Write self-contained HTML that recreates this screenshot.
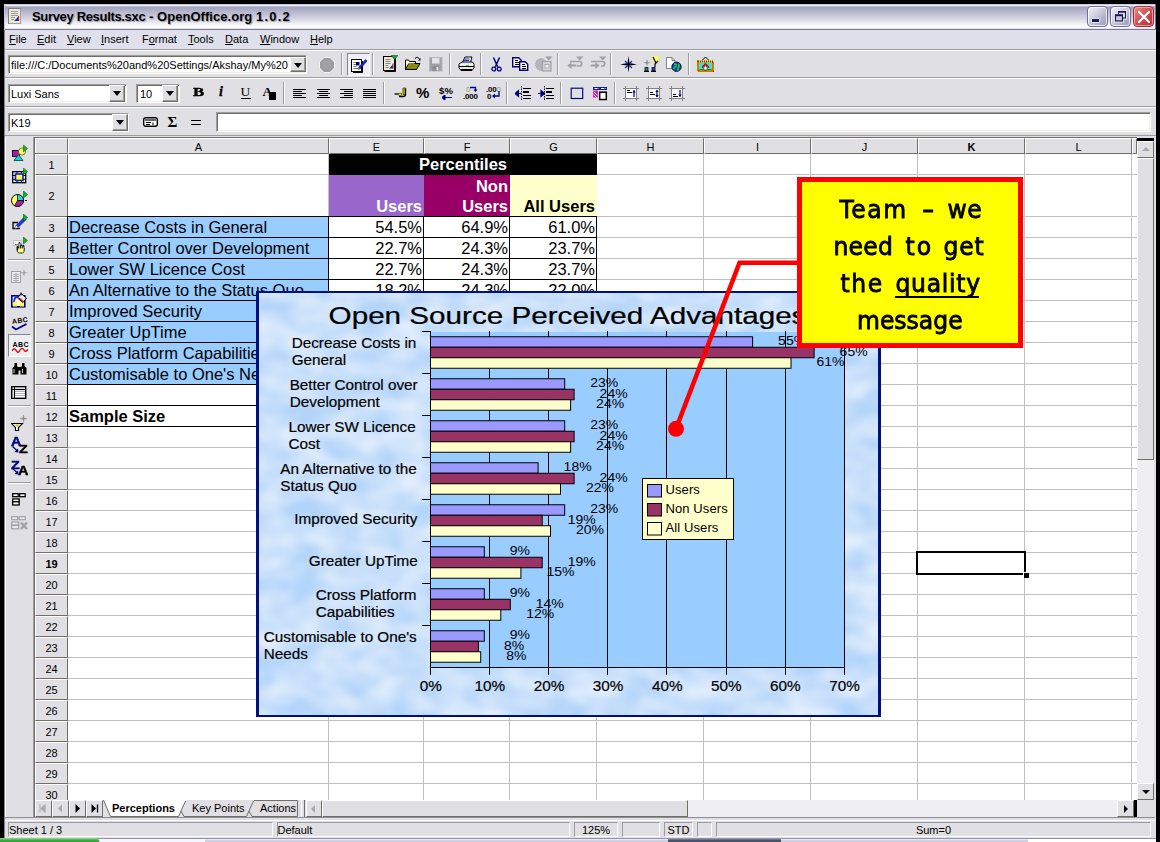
<!DOCTYPE html>
<html><head><meta charset="utf-8"><title>Survey Results.sxc - OpenOffice.org 1.0.2</title>
<style>
*{box-sizing:border-box;margin:0;padding:0}
html,body{width:1160px;height:842px;overflow:hidden;background:#000}
body{position:relative;font-family:"Liberation Sans",sans-serif;font-size:11px;color:#000}
#win{position:absolute;left:4px;top:4px;width:1152px;height:834px;background:#e0dfe3}
#root{position:absolute;left:0;top:0;width:1160px;height:842px}
#root>*{position:absolute}
#root i{position:absolute;display:block}
.t{white-space:pre;line-height:1}
.wb{top:6px;width:21px;height:21px;border-radius:4px;border:1px solid #6e6e9a;background:linear-gradient(135deg,#f4f4fa 0,#d4d4e4 35%,#b0b0cc 70%,#9c9cbc 100%);box-shadow:inset 0 0 0 1px rgba(255,255,255,.75)}
.wb.wc{border-color:#a03038;background:linear-gradient(135deg,#e89090 0,#d86060 35%,#c44048 70%,#b83038 100%);box-shadow:inset 0 0 0 1px rgba(255,220,220,.55)}
.wb *{position:absolute}
.hl{height:2px;left:4px;width:1152px;border-top:1px solid #9d9da1;border-bottom:1px solid #fff}
.vs{width:2px;height:22px;border-left:1px solid #9d9da1;border-right:1px solid #fff}
.sunk{background:#fff;border:1px solid;border-color:#9d9da1 #fff #fff #9d9da1;box-shadow:inset 1px 1px 0 #716f64,inset -1px -1px 0 #f1efe2}
.dd{width:16px;height:17px;background:#e0dfe3;border:1px solid;border-color:#fff #716f64 #716f64 #fff;box-shadow:inset -1px -1px 0 #9d9da1}
.dd:after{content:"";position:absolute;left:2.5px;top:5px;border:4.5px solid transparent;border-top:5px solid #000;border-bottom:0}
.mn{top:33px;font-size:11px;white-space:pre;line-height:13px}
.mn u{text-decoration:underline;text-underline-offset:1px;text-decoration-thickness:1px}
.ch{top:138px;height:16px;border:1px solid;border-color:#fff #716f64 #716f64 #fff;text-align:center;font-size:11px;line-height:16px;overflow:hidden}
.rh{left:35px;width:33px;border:1px solid;border-color:#fff #716f64 #716f64 #fff;text-align:center;font-size:11px;overflow:hidden}
.cl{font-size:16.5px;line-height:16px}
.cb{font-size:16.5px;line-height:16px;font-weight:bold}
.co{font:23.500px/28px "DejaVu Sans",sans-serif;white-space:pre;color:#000;-webkit-text-stroke:.8px #000;transform:scaleY(1.08);transform-origin:0 0}
.sb{background:#e0dfe3;border:1px solid;border-color:#fff #716f64 #716f64 #fff}
.sb>*{position:absolute}
.sf{top:822px;height:15px;border:1px solid;border-color:#9a9aa4 #fff #fff #9a9aa4}

</style></head><body>
<div id="win"></div>
<div id="root">
<!-- title bar -->
<div style="left:4px;top:4px;width:1152px;height:26px;background:linear-gradient(#c0c0d6 0,#c8c8dc .5px,#eeeef6 1.500px,#b8b8d2 2.500px,#a6a6c2 3.500px,#a8a8c4 4.500px,#d2d2e0 14px,#fdfdfe 22.500px,#fff 23.500px,#e6e4e8 24.500px,#e6e4e8 25px,#7a7a98 25px,#7a7a98 26px);border-left:1px solid #c9c9dd;border-right:1px solid #6c6c90"></div>
<svg style="left:8px;top:8px" width="14" height="16" viewBox="0 0 14 16">
<rect x="0.5" y="0.5" width="12" height="15" fill="#ece9d8" stroke="#808080"/>
<path d="M3 3.5h7M3 5.5h7M3 7.5h7M3 9.5h4M3 11.5h3" stroke="#9a9a9a" stroke-width="1"/>
<path d="M6 13l4-4v4z" fill="#1030c0"/><path d="M10 13V8l1 0v5z" fill="#c01030"/>
<path d="M12.5 1v15M1 15.5h12" stroke="#a0a0a0" stroke-width="1"/>
</svg>
<div class="t" style="left:32px;top:9px;font:bold 13px 'Liberation Sans',sans-serif;letter-spacing:.05px;color:#000;text-shadow:1px 1px 1px #9a9ab0"><span style="letter-spacing:-.33px">Survey Results.sxc</span> - OpenOffice.org <span style="letter-spacing:1.200px">1.0.2</span></div>
<!-- window buttons -->
<div class="wb" style="left:1087px"><i style="left:4px;top:12px;width:7px;height:3px;background:#1a1a50;box-shadow:0 0 0 .5px #fff"></i></div>
<div class="wb" style="left:1110px"><svg style="left:2px;top:2px" width="16" height="16" viewBox="0 0 16 16"><g fill="none" stroke="#fff" stroke-width="3" opacity=".75"><path d="M5.500 5v-2.500h7v6.500h-2.500"/><rect x="2.500" y="6" width="7" height="6"/></g><path d="M5.500 5.500v-3h7v6.500h-3" fill="none" stroke="#1a1a50" stroke-width="1.200"/><path d="M5 2.800h8" stroke="#1a1a50" stroke-width="1.800"/><rect x="2.500" y="6" width="7" height="6" fill="#c8c8dc" stroke="#1a1a50" stroke-width="1.200"/><path d="M2 6.300h8" stroke="#1a1a50" stroke-width="1.800"/></svg></div>
<div class="wb wc" style="left:1133px"><svg style="left:0;top:0" width="20" height="20" viewBox="0 0 20 20"><path d="M5 5l10 10M15 5L5 15" stroke="#fff" stroke-width="2.300" stroke-linecap="round"/></svg></div>
<!-- menu bar -->
<div style="left:5px;top:30px;width:1150px;height:19px;background:#dfe0eb"></div>
<div class="mn" style="left:9px"><u>F</u>ile</div>
<div class="mn" style="left:37px"><u>E</u>dit</div>
<div class="mn" style="left:67px"><u>V</u>iew</div>
<div class="mn" style="left:101px"><u>I</u>nsert</div>
<div class="mn" style="left:142px">F<u>o</u>rmat</div>
<div class="mn" style="left:188px"><u>T</u>ools</div>
<div class="mn" style="left:225px"><u>D</u>ata</div>
<div class="mn" style="left:260px"><u>W</u>indow</div>
<div class="mn" style="left:310px"><u>H</u>elp</div>
<div class="hl" style="top:49px"></div>
<div class="hl" style="top:77px"></div>
<div class="hl" style="top:106px"></div>
<div class="hl" style="top:135px;border-bottom:0;height:1px"></div>
<!-- toolbar 1 -->
<div class="sunk" style="left:8px;top:55px;width:299px;height:19px"></div>
<div class="t" style="left:11px;top:60px;font-size:11px">file:///C:/Documents%20and%20Settings/Akshay/My%20</div>
<div style="left:288px;top:57px;width:19px;height:15px;background:#fff"></div>
<div class="dd" style="left:290px;top:57px;height:15px"></div>
<div class="vs" style="left:341px;top:53px"></div>
<div class="vs" style="left:372px;top:53px"></div>
<div class="vs" style="left:449px;top:53px"></div>
<div class="vs" style="left:480px;top:53px"></div>
<div class="vs" style="left:557px;top:53px"></div>
<div class="vs" style="left:610px;top:53px"></div>
<div class="vs" style="left:688px;top:53px"></div>
<!-- toolbar 2 -->
<div class="sunk" style="left:8px;top:84px;width:119px;height:19px"></div>
<div class="t" style="left:11px;top:89px;font-size:11px">Luxi Sans</div>
<div class="dd" style="left:109px;top:85px"></div>
<div class="sunk" style="left:136px;top:84px;width:44px;height:19px"></div>
<div class="t" style="left:140px;top:89px;font-size:11px">10</div>
<div class="dd" style="left:162px;top:85px"></div>
<div class="vs" style="left:283px;top:82px"></div>
<div class="vs" style="left:383px;top:82px"></div>
<div class="vs" style="left:506px;top:82px"></div>
<div class="vs" style="left:560px;top:82px"></div>
<div class="vs" style="left:614px;top:82px"></div>
<!-- formula bar -->
<div class="sunk" style="left:8px;top:113px;width:121px;height:19px"></div>
<div class="t" style="left:11px;top:118px;font-size:11px">K19</div>
<div class="dd" style="left:112px;top:114px"></div>
<div class="sunk" style="left:216px;top:112px;width:935px;height:20px"></div>
<!--ICONS-->
<!-- toolbar icons -->
<svg style="left:319px;top:57px" width="16" height="16" viewBox="0 0 16 16" ><path d="M5 .5h6l4.500 4.500v6l-4.500 4.500h-6l-4.500-4.500v-6z" fill="#a2a2a6" stroke="#f4f4f6" stroke-width="1"/><path d="M5.300 2h5.400l3.300 3.300v5.400l-3.300 3.300h-5.400l-3.300-3.300v-5.400z" fill="#a2a2a6" stroke="#8e8e94" stroke-width=".6"/></svg>
<div style="left:347px;top:53px;width:23px;height:23px;background:#efeff3;border:1px solid;border-color:#85858f #fff #fff #85858f"></div>
<svg style="left:351px;top:57px" width="17" height="16" viewBox="0 0 17 16" ><rect x=".5" y="2.500" width="10" height="12" fill="#fff" stroke="#000"/><path d="M11.500 4v11.500h-9.500" stroke="#000" fill="none"/><path d="M2.500 5.500h3M2.500 7.500h3M2.500 9.500h3M2.500 11.500h5" stroke="#707070"/><rect x="5" y="5" width="3.500" height="3.500" fill="#000080"/><path d="M14.500 2.500l1.500 1.500-7 8-2 .5.500-2z" fill="#1030c0" stroke="#000060" stroke-width=".6"/><path d="M7.500 10.500l1.500 1.500-2 .700z" fill="#f0d000"/></svg>
<svg style="left:383px;top:55px" width="15" height="17" viewBox="0 0 15 17" ><rect x=".5" y="1.500" width="11" height="14" fill="#ece9d8" stroke="#000"/><path d="M12.500 3v13.500h-11" stroke="#000" fill="none"/><path d="M2.500 4.500h5M2.500 6.500h5M2.500 8.500h5M2.500 10.500h3M2.500 12.500h3" stroke="#808080"/><path d="M6 13.500l4-4v4z" fill="#1020b0"/><path d="M9.500 13.500v-5h1v5z" fill="#c01040"/><path d="M8 .5h7l-3.500 4z" fill="#00b030" stroke="#004010" stroke-width=".5"/></svg>
<svg style="left:405px;top:56px" width="16" height="15" viewBox="0 0 16 15" ><path d="M10 2.500c1.500-1.800 3.500-1.500 4.500.5" fill="none" stroke="#000" stroke-width="1"/><path d="M15.500 2v2.500h-2.500z" fill="#000"/><path d="M.5 13.500v-9.500h3l1 1.500h6v2" fill="#ffff99" stroke="#000" stroke-width="1"/><path d="M.5 13.500l3-6h11.500l-3.500 6z" fill="#8a8a10" stroke="#000" stroke-width="1"/><path d="M1.500 5h2v1.500h6v1h-6.500l-1.500 3.500z" fill="#fffff0"/></svg>
<svg style="left:429px;top:57px" width="14" height="15" viewBox="0 0 14 15" ><rect x=".5" y=".5" width="12.500" height="13.500" fill="#a0a0a8" stroke="#b8b8c0"/><rect x="3" y="1" width="7.500" height="5.500" fill="#e4e4e8"/><rect x="3.500" y="9" width="6.500" height="5" fill="#8c8c94"/><rect x="7.500" y="10" width="1.800" height="3.500" fill="#e4e4e8"/></svg>
<svg style="left:458px;top:56px" width="17" height="16" viewBox="0 0 17 16" ><path d="M4.500 6.500l2.500-5.500h7l-1.500 5.500z" fill="#fff" stroke="#000" stroke-width="1"/><path d="M6.500 3h5M6 4.500h5" stroke="#2030d0" stroke-width="1"/><path d="M1 8l3-2h10.500l1.500 2v4l-2 2.500h-11l-2-2.500z" fill="#e8e8e8" stroke="#000" stroke-width="1"/><path d="M1 10.500h15M3 13.500h11" stroke="#000" stroke-width="1.200"/><path d="M8 9h3" stroke="#00c000" stroke-width="1.200"/><path d="M1.500 8.500h14" stroke="#fff" stroke-width=".8"/></svg>
<svg style="left:491px;top:57px" width="11" height="16" viewBox="0 0 11 16" ><path d="M2.500 .5l4 9M8.500 .5l-4 9" stroke="#000080" stroke-width="1.500" fill="none"/><circle cx="2.800" cy="12" r="1.900" fill="none" stroke="#000080" stroke-width="1.300"/><circle cx="8.200" cy="12" r="1.900" fill="none" stroke="#000080" stroke-width="1.300"/><path d="M4.500 9.500l-1 1M6.500 9.500l1 1" stroke="#000080" stroke-width="1.300"/></svg>
<svg style="left:512px;top:57px" width="17" height="14" viewBox="0 0 17 14" ><path d="M.700 .700h6l2.500 2.500v6.500h-8.500z" fill="#fff" stroke="#000080" stroke-width="1.400"/><path d="M2.500 3.500h3.500M2.500 5.500h4M2.500 7.500h4" stroke="#000" stroke-width="1" shape-rendering="crispEdges"/><path d="M7.700 4.700h5.500l2.500 2.500v6h-8z" fill="#fff" stroke="#000080" stroke-width="1.400"/><path d="M9.500 7.500h3.500M9.500 9.500h4M9.500 11.500h4" stroke="#000" stroke-width="1" shape-rendering="crispEdges"/></svg>
<svg style="left:535px;top:56px" width="18" height="16" viewBox="0 0 18 16" ><path d="M10 .5h7.500l-3.700 4z" fill="#a0a0a8"/><ellipse cx="6" cy="8.500" rx="5.500" ry="6" fill="#b4b4bc" stroke="#a0a0a8" stroke-width="1" stroke-dasharray="1 1"/><rect x="7.500" y="5.500" width="8.500" height="9.500" fill="#d4d4da" stroke="#a0a0a8" stroke-width="1.200"/><rect x="10" y="8.500" width="4" height="3.500" fill="#efeff3" stroke="#a0a0a8" stroke-width=".8"/></svg>
<svg style="left:567px;top:56px" width="17" height="14" viewBox="0 0 17 14" ><path d="M9 .5h7.500l-3.700 4z" fill="#a0a0a8"/><path d="M3 5.500h9.500a2.200 2.200 0 0 1 0 4.500H10" fill="none" stroke="#a0a0a8" stroke-width="1.700"/><path d="M.3 9.500l4.200-3.500v2.500h5v2h-5v2.500z" fill="#a0a0a8"/></svg>
<svg style="left:590px;top:56px" width="17" height="14" viewBox="0 0 17 14" ><path d="M9 .5h7.500l-3.700 4z" fill="#a0a0a8"/><path d="M1 5.500h11.500a2.200 2.200 0 0 1 0 4.500H11" fill="none" stroke="#a0a0a8" stroke-width="1.700"/><path d="M9.500 9.500l-4.200-3.500v2.500h-4.500v2h4.500v2.500z" fill="#a0a0a8"/></svg>
<svg style="left:620px;top:56px" width="17" height="17" viewBox="0 0 17 17" ><path d="M8.500 0l1 7 7.500 1.500-7.500 1-1 7-1-7-7.500-1 7.500-1.500z" fill="#000"/><path d="M5 5l2.500 2.500M12 5l-2.500 2.500M5 12l2.500-2.500M12 12l-2.500-2.500" stroke="#2030c0" stroke-width="1.300"/></svg>
<svg style="left:643px;top:56px" width="17" height="16" viewBox="0 0 17 16" ><path d="M4 3l.8 3 3 .8-3 .8-.8 3-.8-3-3-.8 3-.8z" fill="#909090"/><rect x="9" y="0" width="7" height="6" fill="#ffff80" stroke="#c0c000" stroke-width=".5" stroke-dasharray="1 1"/><path d="M10 1l3 6M15 5l-3 3v3" stroke="#000" stroke-width="1.200" fill="none"/><path d="M1 15.500h5M8 15.500h5" stroke="#000" stroke-width="1.400"/><rect x="2" y="11.500" width="3" height="3.500" fill="#208080" stroke="#000" stroke-width=".7"/><rect x="9" y="11.500" width="3" height="3.500" fill="#2040c0" stroke="#000" stroke-width=".7"/></svg>
<svg style="left:666px;top:57px" width="16" height="15" viewBox="0 0 16 15" ><path d="M.5 .5h5.500l3 3v8h-8.500z" fill="#fff" stroke="#808080" stroke-width="1"/><path d="M6 .5v3h3" fill="none" stroke="#808080"/><circle cx="10.500" cy="9.800" r="4.700" fill="#1040d0" stroke="#000" stroke-width=".8"/><path d="M8 7.500c1.500-1 2.500 0 2 1.500s-2 1-2.500 3M12 7c1 .5 1.500 2 .5 3.500s0 2.500-1 3" stroke="#20d020" stroke-width="1.600" fill="none"/></svg>
<svg style="left:697px;top:56px" width="17" height="16" viewBox="0 0 17 16" ><path d="M5 4.500l3.500-3.500 3.500 3.500" fill="none" stroke="#000" stroke-width="1"/><rect x="1" y="5.500" width="15" height="9.500" fill="#40e0e0" stroke="#f0e000" stroke-width="2" /><rect x="1" y="5.500" width="15" height="9.500" fill="none" stroke="#a02000" stroke-width="2" stroke-dasharray="1 1"/><path d="M5 11.500l3.500-3.500 3.500 3.500" fill="none" stroke="#e00000" stroke-width="1.600"/><path d="M6.800 14v-2.500l1.700-1.700 1.700 1.700v2.500z" fill="#fff" stroke="#000" stroke-width=".6"/><path d="M2.500 13.500h4M10.500 13.500h4" stroke="#00a000" stroke-width="1.200"/></svg>
<div class="t" style="left:193px;top:84px;font:bold 13.500px/16px 'Liberation Serif',serif;transform:scaleX(1.250);transform-origin:0 0;-webkit-text-stroke:.4px #000">B</div>
<div class="t" style="left:219px;top:84px;font:italic bold 14px/16px 'Liberation Serif',serif;-webkit-text-stroke:.3px #000">i</div>
<div class="t" style="left:240.500px;top:84px;font:13.500px/16px 'Liberation Serif',serif">U</div>
<div style="left:241px;top:98px;width:10px;height:1px;background:#000"></div>
<div class="t" style="left:262.500px;top:84px;font:bold 13.500px/16px 'Liberation Serif',serif">A</div>
<div style="left:269px;top:92px;width:7px;height:8px;background:#000"></div>
<svg style="left:293px;top:89px" width="13" height="10" viewBox="0 0 13 10" ><path d="M0 0.5h13M0 2.5h9M0 4.5h13M0 6.5h9M0 8.5h13" stroke="#000" stroke-width="1" shape-rendering="crispEdges"/></svg>
<svg style="left:317px;top:89px" width="13" height="10" viewBox="0 0 13 10" ><path d="M0 0.5h13M2 2.5h9M0 4.5h13M2 6.5h9M0 8.5h13" stroke="#000" stroke-width="1" shape-rendering="crispEdges"/></svg>
<svg style="left:340px;top:89px" width="13" height="10" viewBox="0 0 13 10" ><path d="M0 0.5h13M4 2.5h9M0 4.5h13M4 6.5h9M0 8.5h13" stroke="#000" stroke-width="1" shape-rendering="crispEdges"/></svg>
<svg style="left:363px;top:89px" width="13" height="10" viewBox="0 0 13 10" ><path d="M0 0.5h13M0 2.5h13M0 4.5h13M0 6.5h13M0 8.5h13" stroke="#000" stroke-width="1" shape-rendering="crispEdges"/></svg>
<svg style="left:394px;top:87px" width="13" height="11" viewBox="0 0 13 11" ><path d="M9 1h2.500v6.500h-2.500z" fill="#c8c000" stroke="#404000" stroke-width=".8"/><path d="M11.500 1.500v6c0 1.500-1 2-2.500 2h-4" fill="none" stroke="#000" stroke-width="1.300"/><path d="M.5 7h4" stroke="#000" stroke-width="1.300"/><path d="M4.500 6.200h3v2.200h-3z" fill="#e8e000" stroke="#404000" stroke-width=".6"/></svg>
<div class="t" style="left:416px;top:85px;font:bold 15px/16px 'Liberation Sans',sans-serif">%</div>
<div class="t" style="left:439px;top:85px;font:bold 9.500px/11px 'Liberation Sans',sans-serif;letter-spacing:.3px">$%</div>
<svg style="left:442px;top:95px" width="10" height="5" viewBox="0 0 10 5" ><path d="M0 2.500l3-2.500v5zM3 2.500h7" fill="#000080" stroke="#000080" stroke-width="1.200"/></svg>
<div class="t" style="left:466px;top:85px;font:8px/9px 'Liberation Sans',sans-serif;color:#909090">0</div>
<svg style="left:470px;top:86px" width="8" height="6" viewBox="0 0 8 6" ><path d="M0 1.500h5.500v3" fill="none" stroke="#000080" stroke-width="1.300"/><path d="M3.500 3.500h4l-2 2.500z" fill="#000080"/></svg>
<div class="t" style="left:463px;top:92px;font:bold 8px/9px 'Liberation Sans',sans-serif;letter-spacing:-.2px">.000</div>
<div class="t" style="left:486px;top:85px;font:bold 8px/9px 'Liberation Sans',sans-serif;letter-spacing:-.2px">.00<span style="color:#909090;font-weight:normal">0</span></div>
<div class="t" style="left:487px;top:92px;font:bold 8px/9px 'Liberation Sans',sans-serif">0</div>
<svg style="left:492px;top:91px" width="8" height="8" viewBox="0 0 8 8" ><path d="M7 0v5h-5" fill="none" stroke="#000080" stroke-width="1.300"/><path d="M0 5l3-2.500v5z" fill="#000080"/></svg>
<svg style="left:515px;top:86px" width="17" height="15" viewBox="0 0 17 15" ><path d="M0 7.500l3.500-3v6zM3 7.500h3" fill="#000080" stroke="#000080" stroke-width="1.200"/><path d="M6.500 0v15" stroke="#000" stroke-width="1" stroke-dasharray="1.500 1"/><path d="M8 2.500h8M8 9.500h8M8 12.500h8" stroke="#000" stroke-width="1" shape-rendering="crispEdges"/><path d="M8 6h6" stroke="#000" stroke-width="2" shape-rendering="crispEdges"/></svg>
<svg style="left:538px;top:86px" width="17" height="15" viewBox="0 0 17 15" ><path d="M6.500 7.500l-3.500-3v6zM0 7.500h3.500" fill="#000080" stroke="#000080" stroke-width="1.200"/><path d="M6.500 0v15" stroke="#000" stroke-width="1" stroke-dasharray="1.500 1"/><path d="M8 2.500h8M8 9.500h8M8 12.500h8" stroke="#000" stroke-width="1" shape-rendering="crispEdges"/><path d="M8 6h6" stroke="#000" stroke-width="2" shape-rendering="crispEdges"/></svg>
<svg style="left:570px;top:87px" width="14" height="13" viewBox="0 0 14 13" ><rect x="1.200" y="1.200" width="11.500" height="10.300" fill="none" stroke="#000080" stroke-width="1.150"/></svg>
<svg style="left:593px;top:87px" width="15" height="14" viewBox="0 0 15 14" ><rect x="0" y="0" width="14" height="3" fill="#1020a0"/><path d="M1.500 1.500h4M8 1.500h4.500" stroke="#fff" stroke-width="1" stroke-dasharray="3 .6"/><rect x="0" y="3.500" width="5" height="7" fill="#d020c0"/><path d="M.5 4.500l4 4M.5 7.500l3 3" stroke="#fff" stroke-width=".9"/><rect x="6.700" y="5.200" width="6.600" height="7.300" fill="#fff" stroke="#000" stroke-width="1.500"/></svg>
<svg style="left:623px;top:86px" width="16" height="15" viewBox="0 0 16 15" ><rect x="2" y="2" width="12" height="11" fill="#fff"/><path d="M2.500 0v15M13.500 0v15M0 2.500h16M0 12.500h16" stroke="#808088" stroke-width="1"/><path d="M4 4.500h3M4 6.500h5" stroke="#000" stroke-width="1"/><path d="M11 4.500v6.500" stroke="#000080" stroke-width="1.200"/><path d="M9.300 6.500l1.700-2.500 1.700 2.500z" fill="#000080"/></svg>
<svg style="left:646px;top:86px" width="16" height="15" viewBox="0 0 16 15" ><rect x="2" y="2" width="12" height="11" fill="#fff"/><path d="M2.500 0v15M13.500 0v15M0 2.500h16M0 12.500h16" stroke="#808088" stroke-width="1"/><path d="M4 6.500h3M4 8.500h5" stroke="#000" stroke-width="1"/><path d="M11 4.500v6.500" stroke="#000080" stroke-width="1.200"/><path d="M9.300 6l1.700-2.500 1.700 2.500zM9.300 9l1.700 2.500 1.700-2.500z" fill="#000080"/></svg>
<svg style="left:669px;top:86px" width="16" height="15" viewBox="0 0 16 15" ><rect x="2" y="2" width="12" height="11" fill="#fff"/><path d="M2.500 0v15M13.500 0v15M0 2.500h16M0 12.500h16" stroke="#808088" stroke-width="1"/><path d="M4 8.500h3M4 10.500h5" stroke="#000" stroke-width="1"/><path d="M11 4v6.500" stroke="#000080" stroke-width="1.200"/><path d="M9.300 8.500l1.700 2.500 1.700-2.500z" fill="#000080"/></svg>
<svg style="left:143px;top:117px" width="15" height="10" viewBox="0 0 15 10" ><rect x=".7" y=".7" width="13.600" height="8.600" rx="2" fill="#fff" stroke="#000" stroke-width="1.400"/><path d="M2 3h11" stroke="#000" stroke-width="1.200"/><path d="M3 5.500h5M3 7.500h4M10 5.500v2.500" stroke="#000" stroke-width="1"/></svg>
<div class="t" style="left:167.500px;top:113px;font:bold 15px/18px 'Liberation Serif',serif">Σ</div>
<div style="left:191px;top:120px;width:10px;height:1px;background:#000"></div><div style="left:191px;top:124px;width:10px;height:1px;background:#000"></div>
<!-- grid -->
<div style="left:68px;top:154px;width:1069px;height:646px;background:#fff"></div>
<div style="left:5px;top:137px;width:29px;height:681px;background:#e0dfe3"></div>
<div style="left:34px;top:137px;width:1px;height:681px;background:#716f64"></div>
<div style="left:33px;top:137px;width:1px;height:681px;background:#9d9da1"></div>
<div style="left:5px;top:137px;width:1px;height:681px;background:#fff"></div>
<div style="left:4px;top:30px;width:1px;height:808px;background:#85858d"></div>
<svg style="left:68px;top:154px" width="1069" height="646" shape-rendering="crispEdges"><path d="M0 20.5h1069M0 62.5h1069M0 83.5h1069M0 104.5h1069M0 125.5h1069M0 146.5h1069M0 167.5h1069M0 188.5h1069M0 209.5h1069M0 230.5h1069M0 251.5h1069M0 272.5h1069M0 293.5h1069M0 314.5h1069M0 335.5h1069M0 356.5h1069M0 377.5h1069M0 398.5h1069M0 419.5h1069M0 440.5h1069M0 461.5h1069M0 482.5h1069M0 503.5h1069M0 524.5h1069M0 545.5h1069M0 566.5h1069M0 587.5h1069M0 608.5h1069M0 629.5h1069M260.5 0v646M355.5 0v646M441.5 0v646M528.5 0v646M635.5 0v646M742.5 0v646M849.5 0v646M956.5 0v646M1063.5 0v646" stroke="#c0c0c0" stroke-width="1" fill="none"/></svg>
<div style="left:35px;top:137px;width:1102px;height:17px;background:#e0dfe3;border-top:1px solid #716f64;border-bottom:1px solid #716f64"></div>
<div style="left:35px;top:138px;width:33px;height:15px;border:1px solid;border-color:#fff #716f64 #e0dfe3 #fff"></div>
<div class="ch" style="left:68px;width:261px;">A</div>
<div class="ch" style="left:329px;width:95px;">E</div>
<div class="ch" style="left:424px;width:86px;">F</div>
<div class="ch" style="left:510px;width:87px;">G</div>
<div class="ch" style="left:597px;width:107px;">H</div>
<div class="ch" style="left:704px;width:107px;">I</div>
<div class="ch" style="left:811px;width:107px;">J</div>
<div class="ch" style="left:918px;width:107px;font-weight:bold;">K</div>
<div class="ch" style="left:1025px;width:107px;">L</div>
<div class="ch" style="left:1132px;width:5px;"></div>
<div style="left:35px;top:154px;width:33px;height:646px;background:#e0dfe3;border-right:1px solid #716f64"></div>
<div class="rh" style="top:154px;height:21px;line-height:20px;">1</div>
<div class="rh" style="top:175px;height:42px;line-height:41px;">2</div>
<div class="rh" style="top:217px;height:21px;line-height:20px;">3</div>
<div class="rh" style="top:238px;height:21px;line-height:20px;">4</div>
<div class="rh" style="top:259px;height:21px;line-height:20px;">5</div>
<div class="rh" style="top:280px;height:21px;line-height:20px;">6</div>
<div class="rh" style="top:301px;height:21px;line-height:20px;">7</div>
<div class="rh" style="top:322px;height:21px;line-height:20px;">8</div>
<div class="rh" style="top:343px;height:21px;line-height:20px;">9</div>
<div class="rh" style="top:364px;height:21px;line-height:20px;">10</div>
<div class="rh" style="top:385px;height:21px;line-height:20px;">11</div>
<div class="rh" style="top:406px;height:21px;line-height:20px;">12</div>
<div class="rh" style="top:427px;height:21px;line-height:20px;">13</div>
<div class="rh" style="top:448px;height:21px;line-height:20px;">14</div>
<div class="rh" style="top:469px;height:21px;line-height:20px;">15</div>
<div class="rh" style="top:490px;height:21px;line-height:20px;">16</div>
<div class="rh" style="top:511px;height:21px;line-height:20px;">17</div>
<div class="rh" style="top:532px;height:21px;line-height:20px;">18</div>
<div class="rh" style="top:553px;height:21px;line-height:20px;font-weight:bold;">19</div>
<div class="rh" style="top:574px;height:21px;line-height:20px;">20</div>
<div class="rh" style="top:595px;height:21px;line-height:20px;">21</div>
<div class="rh" style="top:616px;height:21px;line-height:20px;">22</div>
<div class="rh" style="top:637px;height:21px;line-height:20px;">23</div>
<div class="rh" style="top:658px;height:21px;line-height:20px;">24</div>
<div class="rh" style="top:679px;height:21px;line-height:20px;">25</div>
<div class="rh" style="top:700px;height:21px;line-height:20px;">26</div>
<div class="rh" style="top:721px;height:21px;line-height:20px;">27</div>
<div class="rh" style="top:742px;height:21px;line-height:20px;">28</div>
<div class="rh" style="top:763px;height:21px;line-height:20px;">29</div>
<div class="rh" style="top:784px;height:21px;line-height:20px;">30</div>
<!-- left toolbar icons -->
<svg style="left:12px;top:145px" width="16" height="16" viewBox="0 0 16 16" ><rect x=".5" y="5.500" width="7" height="6" fill="#a020a0" stroke="#300030" stroke-width="1"/><circle cx="10" cy="6.500" r="3.500" fill="#ffff60" stroke="#505000" stroke-width=".7"/><path d="M2 15.500l4.500-6 4.500 6z" fill="#20d0d0" stroke="#004040" stroke-width=".8"/><path d="M11.500 0l4 3.500-4 3.500z" fill="#00c020" stroke="#004000" stroke-width=".5"/></svg>
<svg style="left:12px;top:168px" width="16" height="16" viewBox="0 0 16 16" ><rect x=".7" y="3.700" width="13" height="11" fill="#fff" stroke="#000" stroke-width="1.300"/><path d="M.7 7.500h13M.7 11.300h13M5 3.700v11M9.500 3.700v11" stroke="#000" stroke-width="1"/><rect x="3.500" y="6" width="7.500" height="6.500" fill="#ffff40" stroke="#1020c0" stroke-width="1.600"/><path d="M11.500 0l4 3.500-4 3.500z" fill="#00c020" stroke="#004000" stroke-width=".5"/></svg>
<svg style="left:11px;top:191px" width="17" height="16" viewBox="0 0 17 16" ><circle cx="6.500" cy="9.500" r="6" fill="#ffff60" stroke="#000" stroke-width="1"/><path d="M6.500 9.500v-6a6 6 0 0 1 6 6z" fill="#30d0d0" stroke="#000" stroke-width=".7"/><path d="M6.500 9.500h6a6 6 0 0 1-9 5.200z" fill="#a020a0" stroke="#000" stroke-width=".7"/><path d="M12.500 0l4 3.500-4 3.500z" fill="#00c020" stroke="#004000" stroke-width=".5"/><path d="M14 9.500h2" stroke="#000"/></svg>
<svg style="left:12px;top:214px" width="16" height="16" viewBox="0 0 16 16" ><path d="M6 8.500h-5v6h7" fill="none" stroke="#000" stroke-width="1.300"/><path d="M12 3.500l2 2-8 8-3 1 1-3z" fill="#2040e0" stroke="#000060" stroke-width=".7"/><path d="M4 11.500l2 2-3 1z" fill="#fff"/><path d="M11.500 0l4 3.500-4 3.500z" fill="#00c020" stroke="#004000" stroke-width=".5"/></svg>
<svg style="left:12px;top:237px" width="16" height="17" viewBox="0 0 16 17" ><path d="M1.500 3.500h8v5h-8z" fill="#f4f4f8" stroke="#c0c0c8" stroke-width="1"/><path d="M3 7.500h3" stroke="#808080"/><path d="M7.500 6v7M9.500 8.500v4M11.500 9v4M5.500 10v3" stroke="#000" stroke-width="1.800" stroke-linecap="round"/><path d="M5.500 11h6.500v3.500c0 1-1 1.500-2 1.500h-2.500c-1 0-2-.5-2-1.500z" fill="#ffff80" stroke="#000" stroke-width=".8"/><path d="M7.500 6.500v5M9.500 9v3M11.300 9.500v3" stroke="#ffffc0" stroke-width=".7"/><path d="M11.500 0l4 3.500-4 3.500z" fill="#00c020" stroke="#004000" stroke-width=".5"/></svg>
<div style="left:8px;top:259px;width:23px;height:2px;border-top:1px solid #9d9da1;border-bottom:1px solid #fff"></div>
<svg style="left:11px;top:268px" width="17" height="16" viewBox="0 0 17 16" ><rect x=".5" y="3.500" width="9" height="11" fill="#ececf0" stroke="#a0a0a8" stroke-width="1"/><path d="M2 6.500h6M2 8.500h6M2 10.500h6M2 12.500h6M5 5v9" stroke="#a0a0a8" stroke-width=".8"/><path d="M13 1l.8 3 3 .8-3 .8-.8 3-.8-3-3-.8 3-.8z" fill="#a0a0a8"/></svg>
<svg style="left:11px;top:292px" width="17" height="16" viewBox="0 0 17 16" ><rect x=".8" y="3.800" width="13" height="11" fill="#fff" stroke="#000080" stroke-width="1.600"/><rect x="2" y="9" width="4" height="5.500" fill="#ffff40"/><rect x="9" y="9" width="4" height="5.500" fill="#ffff40"/><path d="M3 10c0-4 2-5.500 5-5.500" fill="none" stroke="#2030d0" stroke-width="1.800"/><path d="M10 1.500l5.500 4.500-3.500 4.500-5.500-4.500z" fill="#e8e8ec" stroke="#000" stroke-width="1"/><path d="M8 6l4 3.300" stroke="#c00000" stroke-width="1.200"/><path d="M10 .5v3" stroke="#000" stroke-width="1"/></svg>
<div class="t" style="left:12px;top:317px;font:bold 7px/8px 'Liberation Sans',sans-serif;letter-spacing:.3px;transform:rotate(-8deg)">ABC</div>
<svg style="left:11px;top:323px" width="17" height="8" viewBox="0 0 17 8" ><path d="M1 3.500l4 3 10.500-5.500" fill="none" stroke="#000080" stroke-width="1.800"/></svg>
<div style="left:8px;top:334px;width:23px;height:23px;background:#efeff3;border:1px solid;border-color:#85858f #fff #fff #85858f"></div>
<div class="t" style="left:12.500px;top:341px;font:bold 7px/8px 'Liberation Sans',sans-serif;letter-spacing:.4px">ABC</div>
<svg style="left:12px;top:348px" width="16" height="5" viewBox="0 0 16 5" ><path d="M0 3c1.500-3 3-3 4.500 0s3 0 4-1.500 2.500-1.500 3.500.5 2 1.500 4-.5" fill="none" stroke="#e00000" stroke-width="1.300"/></svg>
<svg style="left:12px;top:363px" width="15" height="12" viewBox="0 0 15 12" ><path d="M2.500 0h2.500v3l1.500 2v6.500h-6v-6.500l2-2zM10 0h2.500v3l2 2v6.500h-6v-6.500l1.500-2z" fill="#000"/><rect x="6" y="4" width="3" height="3.500" fill="#000"/><path d="M2 6v4M10.500 6v4" stroke="#fff" stroke-width=".8"/></svg>
<svg style="left:11px;top:386px" width="16" height="13" viewBox="0 0 16 13" ><rect x=".7" y=".7" width="14" height="11.600" fill="#fff" stroke="#000" stroke-width="1.400"/><path d="M.7 3.500h14" stroke="#000" stroke-width="1.200"/><path d="M3.500 .7v11.600" stroke="#000" stroke-width="1"/><path d="M4 5.500h10M4 7.500h10M4 9.500h10" stroke="#b0b0b8" stroke-width="1"/><path d="M2 5.500v5" stroke="#808080" stroke-dasharray="1 1"/></svg>
<div style="left:8px;top:405px;width:23px;height:2px;border-top:1px solid #9d9da1;border-bottom:1px solid #fff"></div>
<svg style="left:11px;top:415px" width="17" height="16" viewBox="0 0 17 16" ><path d="M12.500 0l.6 3 3 .6-3 .6-.6 3-.6-3-3-.6 3-.6z" fill="#8c8c92" stroke="#8c8c92" stroke-width=".5"/><path d="M.5 8.500h11l-4 4v3h-3v-3z" fill="#fff" stroke="#000" stroke-width="1.100"/><path d="M4 9.500h4.500l-2 2h-.8z" fill="#c8c000"/></svg>
<div class="t" style="left:10.500px;top:437px;font:bold 12px/11px 'Liberation Sans',sans-serif;color:#000080;transform:scaleX(1.200);transform-origin:0 0;-webkit-text-stroke:.4px currentColor">A</div>
<div class="t" style="left:19px;top:443.500px;font:bold 11px/10px 'Liberation Sans',sans-serif;transform:scaleX(1.300);transform-origin:0 0;-webkit-text-stroke:.4px currentColor">Z</div>
<svg style="left:12px;top:446px" width="8" height="7" viewBox="0 0 8 7" ><path d="M.5 .5l5 4.500" stroke="#000080" stroke-width="1.300"/><path d="M6.500 6.500l-4-.5 3.500-3.500z" fill="#000080"/></svg>
<div class="t" style="left:10.500px;top:460px;font:bold 11px/10px 'Liberation Sans',sans-serif;color:#000080;transform:scaleX(1.300);transform-origin:0 0;-webkit-text-stroke:.4px currentColor">Z</div>
<div class="t" style="left:17.500px;top:465.500px;font:bold 12px/11px 'Liberation Sans',sans-serif;transform:scaleX(1.200);transform-origin:0 0;-webkit-text-stroke:.4px currentColor">A</div>
<svg style="left:12px;top:468px" width="8" height="7" viewBox="0 0 8 7" ><path d="M.5 .5l5 4.500" stroke="#000080" stroke-width="1.300"/><path d="M6.500 6.500l-4-.5 3.500-3.500z" fill="#000080"/></svg>
<div style="left:8px;top:482px;width:23px;height:2px;border-top:1px solid #9d9da1;border-bottom:1px solid #fff"></div>
<svg style="left:12px;top:493px" width="15" height="13" viewBox="0 0 15 13" ><rect x=".7" y=".7" width="5.500" height="3" fill="#fff" stroke="#000" stroke-width="1.300"/><rect x="7.700" y=".7" width="5.500" height="3" fill="#fff" stroke="#000" stroke-width="1.300"/><rect x=".7" y="6" width="6.500" height="2.800" fill="#fff" stroke="#000" stroke-width="1.300"/><rect x=".7" y="8.800" width="6.500" height="3.200" fill="#fff" stroke="#000" stroke-width="1.300"/></svg>
<svg style="left:11px;top:516px" width="17" height="14" viewBox="0 0 17 14" ><rect x=".7" y=".7" width="6" height="3" fill="#ececf0" stroke="#a0a0a8" stroke-width="1.200"/><rect x="8.200" y=".7" width="6" height="3" fill="#ececf0" stroke="#a0a0a8" stroke-width="1.200"/><rect x=".7" y="6" width="7" height="3" fill="#ececf0" stroke="#a0a0a8" stroke-width="1.200"/><rect x=".7" y="9.500" width="7" height="3.300" fill="#ececf0" stroke="#a0a0a8" stroke-width="1.200"/><path d="M10 6.500l6 6.500M16 6.500l-6 6.500" stroke="#a0a0a8" stroke-width="2.400"/></svg>
<!-- cells -->
<div style="left:329px;top:154px;width:268px;height:21px;background:#000"></div>
<div class="t cb" style="left:329px;top:156px;width:268px;text-align:center;color:#fff">Percentiles</div>
<div style="left:329px;top:175px;width:95px;height:42px;background:#9966cc"></div>
<div style="left:424px;top:175px;width:86px;height:42px;background:#990066"></div>
<div style="left:510px;top:175px;width:87px;height:42px;background:#ffffcc"></div>
<div class="t cb" style="left:329px;top:198px;width:93px;text-align:right;color:#fff">Users</div>
<div class="t cb" style="left:424px;top:178px;width:84px;text-align:right;color:#fff">Non</div>
<div class="t cb" style="left:424px;top:198px;width:84px;text-align:right;color:#fff">Users</div>
<div class="t cb" style="left:510px;top:198px;width:85px;text-align:right;color:#000">All Users</div>
<div style="left:68px;top:217px;width:260px;height:168px;background:#99ccff"></div>
<svg style="left:0;top:0" width="700" height="440" shape-rendering="crispEdges"><path d="M67 216.5H597M67 237.5H597M67 258.5H597M67 279.5H597M67 300.5H597M67 321.5H597M67 342.5H597M67 363.5H597M67 384.5H597M67 405.5H597M67 426.5H597M67.5 216V427M328.5 216V427M423.5 216V427M509.5 216V427M596.5 216V427" stroke="#000" stroke-width="1" fill="none"/></svg>
<div class="t cl" style="left:69px;top:219px">Decrease Costs in General</div>
<div class="t cl" style="left:329px;width:93px;top:219px;text-align:right">54.5%</div>
<div class="t cl" style="left:424px;width:84px;top:219px;text-align:right">64.9%</div>
<div class="t cl" style="left:510px;width:85px;top:219px;text-align:right">61.0%</div>
<div class="t cl" style="left:69px;top:240px">Better Control over Development</div>
<div class="t cl" style="left:329px;width:93px;top:240px;text-align:right">22.7%</div>
<div class="t cl" style="left:424px;width:84px;top:240px;text-align:right">24.3%</div>
<div class="t cl" style="left:510px;width:85px;top:240px;text-align:right">23.7%</div>
<div class="t cl" style="left:69px;top:261px">Lower SW Licence Cost</div>
<div class="t cl" style="left:329px;width:93px;top:261px;text-align:right">22.7%</div>
<div class="t cl" style="left:424px;width:84px;top:261px;text-align:right">24.3%</div>
<div class="t cl" style="left:510px;width:85px;top:261px;text-align:right">23.7%</div>
<div class="t cl" style="left:69px;top:282px">An Alternative to the Status Quo</div>
<div class="t cl" style="left:329px;width:93px;top:282px;text-align:right">18.2%</div>
<div class="t cl" style="left:424px;width:84px;top:282px;text-align:right">24.3%</div>
<div class="t cl" style="left:510px;width:85px;top:282px;text-align:right">22.0%</div>
<div class="t cl" style="left:69px;top:303px">Improved Security</div>
<div class="t cl" style="left:329px;width:93px;top:303px;text-align:right">22.7%</div>
<div class="t cl" style="left:424px;width:84px;top:303px;text-align:right">18.9%</div>
<div class="t cl" style="left:510px;width:85px;top:303px;text-align:right">20.3%</div>
<div class="t cl" style="left:69px;top:324px">Greater UpTime</div>
<div class="t cl" style="left:329px;width:93px;top:324px;text-align:right">9.1%</div>
<div class="t cl" style="left:424px;width:84px;top:324px;text-align:right">18.9%</div>
<div class="t cl" style="left:510px;width:85px;top:324px;text-align:right">15.3%</div>
<div class="t cl" style="left:69px;top:345px">Cross Platform Capabilities</div>
<div class="t cl" style="left:329px;width:93px;top:345px;text-align:right">9.1%</div>
<div class="t cl" style="left:424px;width:84px;top:345px;text-align:right">13.5%</div>
<div class="t cl" style="left:510px;width:85px;top:345px;text-align:right">11.9%</div>
<div class="t cl" style="left:69px;top:366px">Customisable to One's Needs</div>
<div class="t cl" style="left:329px;width:93px;top:366px;text-align:right">9.1%</div>
<div class="t cl" style="left:424px;width:84px;top:366px;text-align:right">8.1%</div>
<div class="t cl" style="left:510px;width:85px;top:366px;text-align:right">8.5%</div>
<div class="t cb" style="left:69px;top:408px">Sample Size</div>
<div style="left:916px;top:551px;width:110px;height:24px;border:2px solid #000"></div>
<div style="left:1023px;top:572px;width:6px;height:6px;background:#000;border:1px solid #fff;border-right:0;border-bottom:0"></div>
<!-- chart -->
<svg style="left:256px;top:291px" width="625" height="426" viewBox="256 291 625 426" font-family="Liberation Sans, sans-serif">
<defs><filter id="cl" x="0" y="0" width="100%" height="100%" color-interpolation-filters="sRGB"><feTurbulence type="fractalNoise" baseFrequency="0.028 0.04" numOctaves="2" seed="11"/><feColorMatrix type="matrix" values="0 0 0 0 0  0 0 0 0 0  0 0 0 0 0  1.7 0 0 0 -0.4"/><feGaussianBlur stdDeviation="1.2"/><feComposite in="SourceGraphic" operator="in" result="w"/></filter></defs>
<rect x="256" y="291" width="625" height="426" fill="#b4d5fa"/>
<rect x="256" y="291" width="625" height="426" fill="#e3eefc" filter="url(#cl)"/>
<path d="M256 291h625v426h-625z M259 293v422h619v-422z" fill="#001080" fill-rule="evenodd" shape-rendering="crispEdges"/>
<text transform="translate(328.6,324) scale(1,0.831)" font-size="29.65" stroke="#000" stroke-width=".3">Open Source Perceived Advantages</text>
<rect x="431" y="332" width="414" height="335" fill="#99ccff"/>
<path d="M489.5 331v344M548.5 331v344M607.5 331v344M666.5 331v344M726.5 331v344M785.5 331v344M844.5 331v344M430.5 331v344M430 667.5H845M422 331.5h9M422 373.5h9M422 415.5h9M422 457.5h9M422 499.5h9M422 541.5h9M422 583.5h9M422 625.5h9" stroke="#000" stroke-width="1" fill="none" shape-rendering="crispEdges"/>
<rect x="430.5" y="336.75" width="322.1" height="10.5" fill="#9999ff" stroke="#000" stroke-width="1"/>
<text transform="translate(778.1,345.2) scale(1,0.93)" font-size="14" fill="#000">55%</text>
<rect x="430.5" y="347.25" width="383.6" height="10.5" fill="#993366" stroke="#000" stroke-width="1"/>
<text transform="translate(839.6,355.7) scale(1,0.93)" font-size="14" fill="#000">65%</text>
<rect x="430.5" y="357.75" width="360.5" height="10.5" fill="#ffffcc" stroke="#000" stroke-width="1"/>
<text transform="translate(816.5,366.2) scale(1,0.93)" font-size="14" fill="#000">61%</text>
<text transform="translate(0,347.5) scale(1,0.93)" font-size="15.3" stroke="#000" stroke-width=".2" letter-spacing="-0.02"><tspan x="291.7">Decrease Costs in</tspan></text>
<text transform="translate(0,364.5) scale(1,0.93)" font-size="15.3" stroke="#000" stroke-width=".2"><tspan x="291.7">General</tspan></text>
<rect x="430.5" y="378.75" width="134.2" height="10.5" fill="#9999ff" stroke="#000" stroke-width="1"/>
<text transform="translate(590.2,387.2) scale(1,0.93)" font-size="14" fill="#000">23%</text>
<rect x="430.5" y="389.25" width="143.6" height="10.5" fill="#993366" stroke="#000" stroke-width="1"/>
<text transform="translate(599.6,397.7) scale(1,0.93)" font-size="14" fill="#000">24%</text>
<rect x="430.5" y="399.75" width="140.1" height="10.5" fill="#ffffcc" stroke="#000" stroke-width="1"/>
<text transform="translate(596.1,408.2) scale(1,0.93)" font-size="14" fill="#000">24%</text>
<text transform="translate(0,389.5) scale(1,0.93)" font-size="15.3" stroke="#000" stroke-width=".2" letter-spacing="-0.02"><tspan x="289.7">Better Control over</tspan></text>
<text transform="translate(0,406.5) scale(1,0.93)" font-size="15.3" stroke="#000" stroke-width=".2"><tspan x="289.7">Development</tspan></text>
<rect x="430.5" y="420.75" width="134.2" height="10.5" fill="#9999ff" stroke="#000" stroke-width="1"/>
<text transform="translate(590.2,429.2) scale(1,0.93)" font-size="14" fill="#000">23%</text>
<rect x="430.5" y="431.25" width="143.6" height="10.5" fill="#993366" stroke="#000" stroke-width="1"/>
<text transform="translate(599.6,439.7) scale(1,0.93)" font-size="14" fill="#000">24%</text>
<rect x="430.5" y="441.75" width="140.1" height="10.5" fill="#ffffcc" stroke="#000" stroke-width="1"/>
<text transform="translate(596.1,450.2) scale(1,0.93)" font-size="14" fill="#000">24%</text>
<text transform="translate(0,431.5) scale(1,0.93)" font-size="15.3" stroke="#000" stroke-width=".2" letter-spacing="-0.02"><tspan x="288.5">Lower SW Licence</tspan></text>
<text transform="translate(0,448.5) scale(1,0.93)" font-size="15.3" stroke="#000" stroke-width=".2"><tspan x="288.5">Cost</tspan></text>
<rect x="430.5" y="462.75" width="107.6" height="10.5" fill="#9999ff" stroke="#000" stroke-width="1"/>
<text transform="translate(563.6,471.2) scale(1,0.93)" font-size="14" fill="#000">18%</text>
<rect x="430.5" y="473.25" width="143.6" height="10.5" fill="#993366" stroke="#000" stroke-width="1"/>
<text transform="translate(599.6,481.7) scale(1,0.93)" font-size="14" fill="#000">24%</text>
<rect x="430.5" y="483.75" width="130.0" height="10.5" fill="#ffffcc" stroke="#000" stroke-width="1"/>
<text transform="translate(586.0,492.2) scale(1,0.93)" font-size="14" fill="#000">22%</text>
<text transform="translate(0,473.5) scale(1,0.93)" font-size="15.3" stroke="#000" stroke-width=".2" letter-spacing="-0.02"><tspan x="280.3">An Alternative to the</tspan></text>
<text transform="translate(0,490.5) scale(1,0.93)" font-size="15.3" stroke="#000" stroke-width=".2"><tspan x="280.3">Status Quo</tspan></text>
<rect x="430.5" y="504.75" width="134.2" height="10.5" fill="#9999ff" stroke="#000" stroke-width="1"/>
<text transform="translate(590.2,513.2) scale(1,0.93)" font-size="14" fill="#000">23%</text>
<rect x="430.5" y="515.25" width="111.7" height="10.5" fill="#993366" stroke="#000" stroke-width="1"/>
<text transform="translate(567.7,523.7) scale(1,0.93)" font-size="14" fill="#000">19%</text>
<rect x="430.5" y="525.75" width="120.0" height="10.5" fill="#ffffcc" stroke="#000" stroke-width="1"/>
<text transform="translate(576.0,534.2) scale(1,0.93)" font-size="14" fill="#000">20%</text>
<text transform="translate(0,523.8) scale(1,0.93)" font-size="15.3" stroke="#000" stroke-width=".2"><tspan x="294.3">Improved Security</tspan></text>
<rect x="430.5" y="546.75" width="53.8" height="10.5" fill="#9999ff" stroke="#000" stroke-width="1"/>
<text transform="translate(509.8,555.2) scale(1,0.93)" font-size="14" fill="#000">9%</text>
<rect x="430.5" y="557.25" width="111.7" height="10.5" fill="#993366" stroke="#000" stroke-width="1"/>
<text transform="translate(567.7,565.7) scale(1,0.93)" font-size="14" fill="#000">19%</text>
<rect x="430.5" y="567.75" width="90.4" height="10.5" fill="#ffffcc" stroke="#000" stroke-width="1"/>
<text transform="translate(546.4,576.2) scale(1,0.93)" font-size="14" fill="#000">15%</text>
<text transform="translate(0,565.8) scale(1,0.93)" font-size="15.3" stroke="#000" stroke-width=".2"><tspan x="308.8">Greater UpTime</tspan></text>
<rect x="430.5" y="588.75" width="53.8" height="10.5" fill="#9999ff" stroke="#000" stroke-width="1"/>
<text transform="translate(509.8,597.2) scale(1,0.93)" font-size="14" fill="#000">9%</text>
<rect x="430.5" y="599.25" width="79.8" height="10.5" fill="#993366" stroke="#000" stroke-width="1"/>
<text transform="translate(535.8,607.7) scale(1,0.93)" font-size="14" fill="#000">14%</text>
<rect x="430.5" y="609.75" width="70.3" height="10.5" fill="#ffffcc" stroke="#000" stroke-width="1"/>
<text transform="translate(526.3,618.2) scale(1,0.93)" font-size="14" fill="#000">12%</text>
<text transform="translate(0,599.5) scale(1,0.93)" font-size="15.3" stroke="#000" stroke-width=".2" letter-spacing="-0.02"><tspan x="315.7">Cross Platform</tspan></text>
<text transform="translate(0,616.5) scale(1,0.93)" font-size="15.3" stroke="#000" stroke-width=".2"><tspan x="315.7">Capabilities</tspan></text>
<rect x="430.5" y="630.75" width="53.8" height="10.5" fill="#9999ff" stroke="#000" stroke-width="1"/>
<text transform="translate(509.8,639.2) scale(1,0.93)" font-size="14" fill="#000">9%</text>
<rect x="430.5" y="641.25" width="47.9" height="10.5" fill="#993366" stroke="#000" stroke-width="1"/>
<text transform="translate(503.9,649.7) scale(1,0.93)" font-size="14" fill="#000">8%</text>
<rect x="430.5" y="651.75" width="50.2" height="10.5" fill="#ffffcc" stroke="#000" stroke-width="1"/>
<text transform="translate(506.2,660.2) scale(1,0.93)" font-size="14" fill="#000">8%</text>
<text transform="translate(0,641.5) scale(1,0.93)" font-size="15.3" stroke="#000" stroke-width=".2" letter-spacing="-0.02"><tspan x="263.8">Customisable to One's</tspan></text>
<text transform="translate(0,658.5) scale(1,0.93)" font-size="15.3" stroke="#000" stroke-width=".2"><tspan x="263.8">Needs</tspan></text>
<text transform="translate(430.8,691.3) scale(1,0.93)" font-size="15.3" stroke="#000" stroke-width=".2" text-anchor="middle">0%</text>
<text transform="translate(489.9,691.3) scale(1,0.93)" font-size="15.3" stroke="#000" stroke-width=".2" text-anchor="middle">10%</text>
<text transform="translate(549.0,691.3) scale(1,0.93)" font-size="15.3" stroke="#000" stroke-width=".2" text-anchor="middle">20%</text>
<text transform="translate(608.1,691.3) scale(1,0.93)" font-size="15.3" stroke="#000" stroke-width=".2" text-anchor="middle">30%</text>
<text transform="translate(667.2,691.3) scale(1,0.93)" font-size="15.3" stroke="#000" stroke-width=".2" text-anchor="middle">40%</text>
<text transform="translate(726.3,691.3) scale(1,0.93)" font-size="15.3" stroke="#000" stroke-width=".2" text-anchor="middle">50%</text>
<text transform="translate(785.4,691.3) scale(1,0.93)" font-size="15.3" stroke="#000" stroke-width=".2" text-anchor="middle">60%</text>
<text transform="translate(844.5,691.3) scale(1,0.93)" font-size="15.3" stroke="#000" stroke-width=".2" text-anchor="middle">70%</text>
<rect x="642.5" y="478.5" width="91" height="61" fill="#ffffcc" stroke="#000" stroke-width="1"/>
<rect x="647.5" y="484.5" width="14" height="12.5" fill="#9999ff" stroke="#000" stroke-width="1"/>
<text x="665.5" y="493.8" font-size="13" letter-spacing="0.1" fill="#000">Users</text>
<rect x="647.5" y="503.5" width="14" height="12.5" fill="#993366" stroke="#000" stroke-width="1"/>
<text x="665.5" y="512.8" font-size="13" letter-spacing="0.1" fill="#000">Non Users</text>
<rect x="647.5" y="522.5" width="14" height="12.5" fill="#ffffcc" stroke="#000" stroke-width="1"/>
<text x="665.5" y="531.8" font-size="13" letter-spacing="0.1" fill="#000">All Users</text>
</svg>
<!-- callout -->
<svg style="left:640px;top:170px" width="400" height="280" viewBox="640 170 400 280">
<path d="M800 262.700H739.500L676 428.800" fill="none" stroke="#ff0000" stroke-width="4.600" stroke-linejoin="miter"/>
<circle cx="676" cy="428.800" r="8" fill="#ff0000"/>
<rect x="799.500" y="179.500" width="221" height="166" fill="#ffff00" stroke="#ff0000" stroke-width="5"/>
</svg>
<div class="co" style="left:839.500px;top:194.400px;letter-spacing:1.500px">Team</div>
<div class="co" style="left:921.500px;top:194.400px;transform:scale(1.45,1.08)">-</div>
<div class="co" style="left:947.500px;top:194.400px;letter-spacing:.5px">we</div>
<div class="co" style="left:833.500px;top:230.900px;letter-spacing:.2px">need</div>
<div class="co" style="left:905.500px;top:230.900px;letter-spacing:2px">to</div>
<div class="co" style="left:943.500px;top:230.900px;letter-spacing:.8px">get</div>
<div class="co" style="left:840.500px;top:268px;letter-spacing:1.600px">the</div>
<div class="co" style="left:895.500px;top:268px;letter-spacing:.7px">quality</div>
<div style="left:895px;top:296px;width:84px;height:2px;background:#000"></div>
<div class="co" style="left:857px;top:305px;letter-spacing:0">message</div>
<!-- vertical scrollbar -->
<div style="left:1137px;top:138px;width:17px;height:662px;background:#efeff2"></div>
<div style="left:1137px;top:138px;width:17px;height:3px;background:#000"></div>
<div class="sb" style="left:1137px;top:141px;width:17px;height:17px"><i style="left:4px;top:5px;border:4px solid transparent;border-bottom:4px solid #a8a8b0;border-top:0"></i></div>
<div class="sb" style="left:1137px;top:158px;width:17px;height:302px"></div>
<div class="sb" style="left:1137px;top:783px;width:17px;height:17px"><i style="left:4px;top:6px;border:4px solid transparent;border-top:4px solid #000;border-bottom:0"></i></div>
<!-- tab bar / horizontal scrollbar -->
<div style="left:35px;top:800px;width:1119px;height:17px;background:#e0dfe3"></div>
<div style="left:306px;top:800px;width:828px;height:17px;background:#efeff2"></div>
<div class="sb" style="left:35px;top:800px;width:17px;height:17px"><svg width="15" height="15" viewBox="0 0 15 15"><path d="M4 3.500v8M5 7.500l4-4v8z" stroke="#a8a8b0" fill="#a8a8b0" stroke-width="1"/></svg></div>
<div class="sb" style="left:52px;top:800px;width:17px;height:17px"><svg width="15" height="15" viewBox="0 0 15 15"><path d="M5 7.500l4-4v8z" fill="#a8a8b0"/></svg></div>
<div class="sb" style="left:69px;top:800px;width:17px;height:17px"><svg width="15" height="15" viewBox="0 0 15 15"><path d="M10 7.500l-4.500-4.500v9z" fill="#000"/></svg></div>
<div class="sb" style="left:86px;top:800px;width:17px;height:17px"><svg width="15" height="15" viewBox="0 0 15 15"><path d="M9 7.500l-4.500-4.500v9z" fill="#000"/><path d="M10.500 3.500v8" stroke="#000" stroke-width="1.300"/></svg></div>
<svg style="left:103px;top:800px" width="200" height="18" viewBox="0 0 200 18">
<path d="M0 0H200V1H195V16.500H151L148 11" fill="#e0dfe3" stroke="none"/>
<path d="M0.500 0L7.500 16.500H75.500L82.500 0Z" fill="#fff"/>
<path d="M0.500 0L7.500 16.500H75.500L82.500 1" fill="none" stroke="#716f64" stroke-width="1"/>
<path d="M78 11L81 16.500H143.500L150.500 1" fill="none" stroke="#716f64" stroke-width="1"/>
<path d="M146 11L149 16.500H194.500V0.500H151" fill="none" stroke="#716f64" stroke-width="1"/>
</svg>
<div class="t" style="left:112px;top:803px;font-size:11px;font-weight:bold">Perceptions</div>
<div class="t" style="left:192px;top:803px;font-size:11px">Key Points</div>
<div class="t" style="left:260px;top:803px;font-size:11px">Actions</div>
<div style="left:301px;top:800px;width:4px;height:17px;border-left:1px solid #fff;border-right:1px solid #716f64;background:#e0dfe3"></div>
<div class="sb" style="left:306px;top:800px;width:16px;height:17px"><i style="left:4px;top:4px;border:4px solid transparent;border-right:4px solid #a8a8b0;border-left:0"></i></div>
<div class="sb" style="left:322px;top:800px;width:366px;height:17px"></div>
<div class="sb" style="left:1117px;top:800px;width:17px;height:17px"><i style="left:6px;top:4px;border:4px solid transparent;border-left:4px solid #000;border-right:0"></i></div>
<div style="left:1134px;top:800px;width:3px;height:17px;background:#000"></div>
<!-- status bar -->
<div style="left:5px;top:817px;width:1150px;height:1px;background:#8e8e98"></div>
<div style="left:5px;top:820px;width:1150px;height:1px;background:#fff"></div>
<div class="sf" style="left:8px;width:265px"></div>
<div class="sf" style="left:277px;width:293px"></div>
<div class="sf" style="left:574px;width:44px"></div>
<div class="sf" style="left:622px;width:38px"></div>
<div class="sf" style="left:664px;width:29px"></div>
<div class="sf" style="left:697px;width:15px"></div>
<div class="sf" style="left:716px;width:435px"></div>
<div class="t" style="left:9px;top:825px;font-size:11px">Sheet 1 / 3</div>
<div class="t" style="left:277.500px;top:825px;font-size:11px">Default</div>
<div class="t" style="left:574px;top:825px;width:44px;text-align:center;font-size:11px">125%</div>
<div class="t" style="left:664px;top:825px;width:29px;text-align:center;font-size:11px">STD</div>
<div class="t" style="left:716px;top:825px;width:435px;text-align:center;font-size:11px">Sum=0</div>
<!-- taskbar peek -->
<div style="left:0;top:838px;width:1160px;height:4px;background:#000"></div>
<div style="left:4px;top:838px;width:1152px;height:1px;background:#9090b8"></div>
<div style="left:0;top:839px;width:1028px;height:3px;background:linear-gradient(#f2f2f8,#d4d4e4 50%,#c6c6da)"></div>
<div style="left:100px;top:839px;width:105px;height:3px;background:#f6f6fa"></div>
<div style="left:668px;top:839px;width:113px;height:3px;background:linear-gradient(#8088a0,#4a5268 50%)"></div>
<div style="left:1028px;top:839px;width:128px;height:3px;background:#fff"></div>
<div style="left:0;top:838px;width:99px;height:4px;background:linear-gradient(#9ad89a,#48b048 50%,#2f9a2f);border-radius:0 7px 0 0"></div>

</div>
</body></html>
